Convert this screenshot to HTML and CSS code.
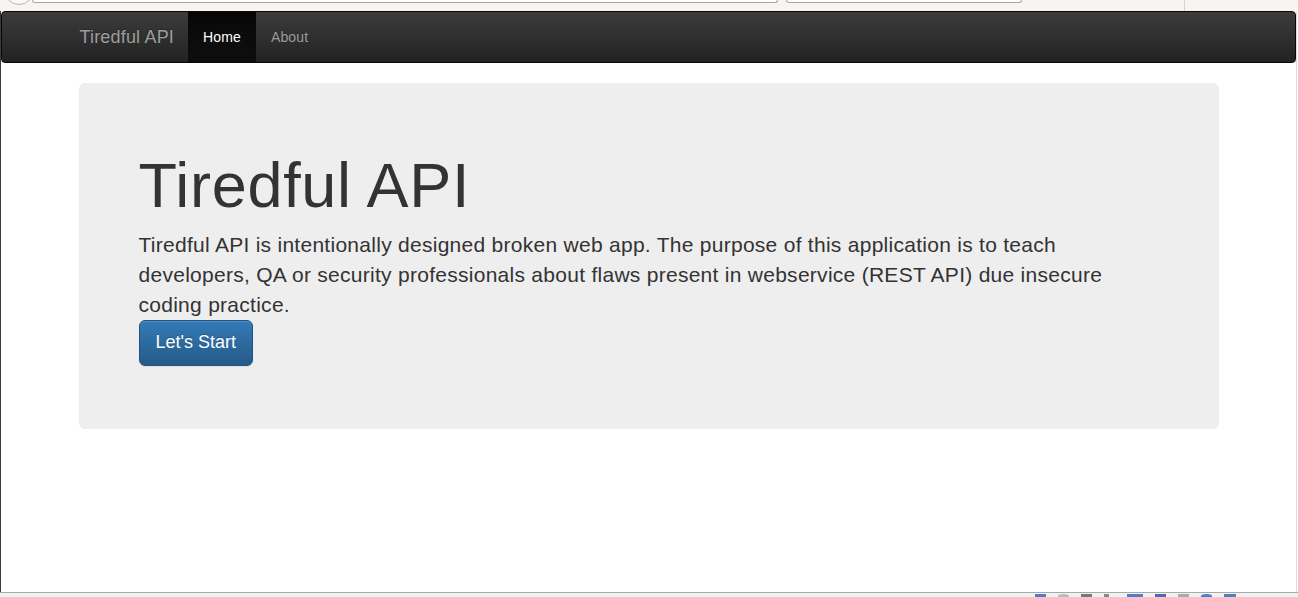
FILE: index.html
```html
<!DOCTYPE html>
<html>
<head>
<meta charset="utf-8">
<title>Tiredful API</title>
<link rel="stylesheet" href="styles.css">
</head>
<body>
<div class="chrome-top">
  <div class="knob-wrap"><div class="knob"></div></div>
  <div class="field field-a"></div>
  <div class="field field-b"></div>
  <div class="spacer"></div>
  <div class="vline"></div>
</div>
<div class="frame">
  <div class="page">
    <nav class="navbar">
      <div class="container nav-inner">
        <a class="brand" href="#">Tiredful API</a>
        <ul class="nav">
          <li class="active"><a href="#">Home</a></li>
          <li><a href="#">About</a></li>
        </ul>
      </div>
    </nav>
    <div class="container">
      <div class="jumbotron">
        <h1>Tiredful API</h1>
        <p>Tiredful API is intentionally designed broken web app. The purpose of this application is to teach developers, QA or security professionals about flaws present in webservice (REST API) due insecure coding practice.</p>
        <div class="actions"><a class="btn" href="#">Let's Start</a></div>
      </div>
    </div>
  </div>
</div>
<div class="chrome-bottom">
  <span class="tray t1"></span><span class="tray t2"></span><span class="tray t3"></span><span class="tray t4"></span>
  <span class="tray t5"></span><span class="tray t6"></span><span class="tray t7"></span><span class="tray t8"></span><span class="tray t9"></span>
</div>
</body>
</html>
```
FILE: styles.css
```css
html, body {
  margin: 0;
  padding: 0;
  background: #fff;
  font-family: "Liberation Sans", Arial, Helvetica, sans-serif;
  color: #333;
  font-size: 14px;
  line-height: 1.42857;
  overflow: hidden;
}
.chrome-top {
  height: 11px;
  background: #f7f4f2;
  display: flex;
  overflow: hidden;
}
.knob-wrap {
  width: 30px;
  height: 11px;
  overflow: hidden;
  margin-left: 4px;
}
.knob {
  width: 28px;
  height: 28px;
  border: 1px solid #b9b6b4;
  border-radius: 50%;
  margin-top: -25px;
  background: #fbfaf9;
}
.field {
  height: 2px;
  border: 1px solid #a9a7a5;
  border-top: none;
  background: #fff;
  border-radius: 0 0 3px 3px;
}
.field-a { width: 744px; margin-left: -2px; }
.field-b { width: 234px; margin-left: 8px; }
.spacer { flex: 1; }
.vline { width: 1px; height: 11px; background: #d6d3d1; margin-right: 113px; }
.frame {
  height: 581px;
  border-left: 1px solid #3a3a3a;
  display: flex;
}
.page {
  width: 1295px;
  border-right: 1px solid #dedede;
}
.container {
  width: 1170px;
  padding: 0 15px;
  margin: 0 auto;
  box-sizing: border-box;
}
.navbar {
  height: 52px;
  box-sizing: border-box;
  border: 1px solid #080808;
  border-radius: 4px;
  background: linear-gradient(to bottom, #3c3c3c 0, #222 100%);
  margin-bottom: 20px;
}
.nav-inner {
  display: flex;
  height: 50px;
}
.brand {
  font-size: 18px;
  line-height: 20px;
  padding: 15px;
  margin-left: -14px;
  letter-spacing: 0.01em;
  color: #9d9d9d;
  text-decoration: none;
  text-shadow: 0 -1px 0 rgba(0,0,0,.25);
}
.nav {
  list-style: none;
  margin: 0 0 0 -1px;
  padding: 0;
  display: flex;
}
.nav a {
  display: block;
  padding: 15px;
  line-height: 20px;
  letter-spacing: 0.01em;
  color: #9d9d9d;
  text-decoration: none;
  text-shadow: 0 -1px 0 rgba(0,0,0,.25);
}
.nav .active a {
  color: #fff;
  background: linear-gradient(to bottom, #080808 0, #0f0f0f 100%);
  box-shadow: inset 0 3px 9px rgba(0,0,0,.25);
}
.jumbotron {
  background: #eee;
  border-radius: 6px;
  padding: 48px 60px 63px;
}
.jumbotron h1 {
  font-size: 63px;
  font-weight: 500;
  line-height: 1.1;
  letter-spacing: 0.011em;
  margin: 20px 0 10px;
  color: #333;
}
.jumbotron p {
  font-size: 21px;
  line-height: 30px;
  letter-spacing: 0.013em;
  margin: 0;
  font-weight: 200;
}
.actions { display: flex; }
.btn {
  display: block;
  font-size: 18px;
  line-height: 1.3333;
  padding: 10px 16px;
  border-radius: 6px;
  border: 1px solid #245580;
  color: #fff;
  text-decoration: none;
  background: linear-gradient(to bottom, #337ab7 0, #265a88 100%);
  text-shadow: 0 -1px 0 rgba(0,0,0,.2);
  box-shadow: inset 0 1px 0 rgba(255,255,255,.15), 0 1px 1px rgba(0,0,0,.075);
}
.chrome-bottom {
  height: 4px;
  border-top: 1px solid #a8a8a8;
  background: #f1f1f1;
  display: flex;
  padding-left: 1035px;
  gap: 12px;
  overflow: hidden;
}
.tray { width: 11px; height: 4px; margin-top: 1px; background: #4d7fc4; }
.t2 { background: #bbb; border-radius: 50% 50% 0 0; }
.t3 { background: #777; }
.t4 { width: 5px; background: #888; }
.t5 { width: 16px; margin-left: 6px; }
.t6 { background: #5167b7; }
.t7 { background: #aaa; }
.t8 { border-radius: 50% 50% 0 0; }
.t9 { width: 12px; }
```
